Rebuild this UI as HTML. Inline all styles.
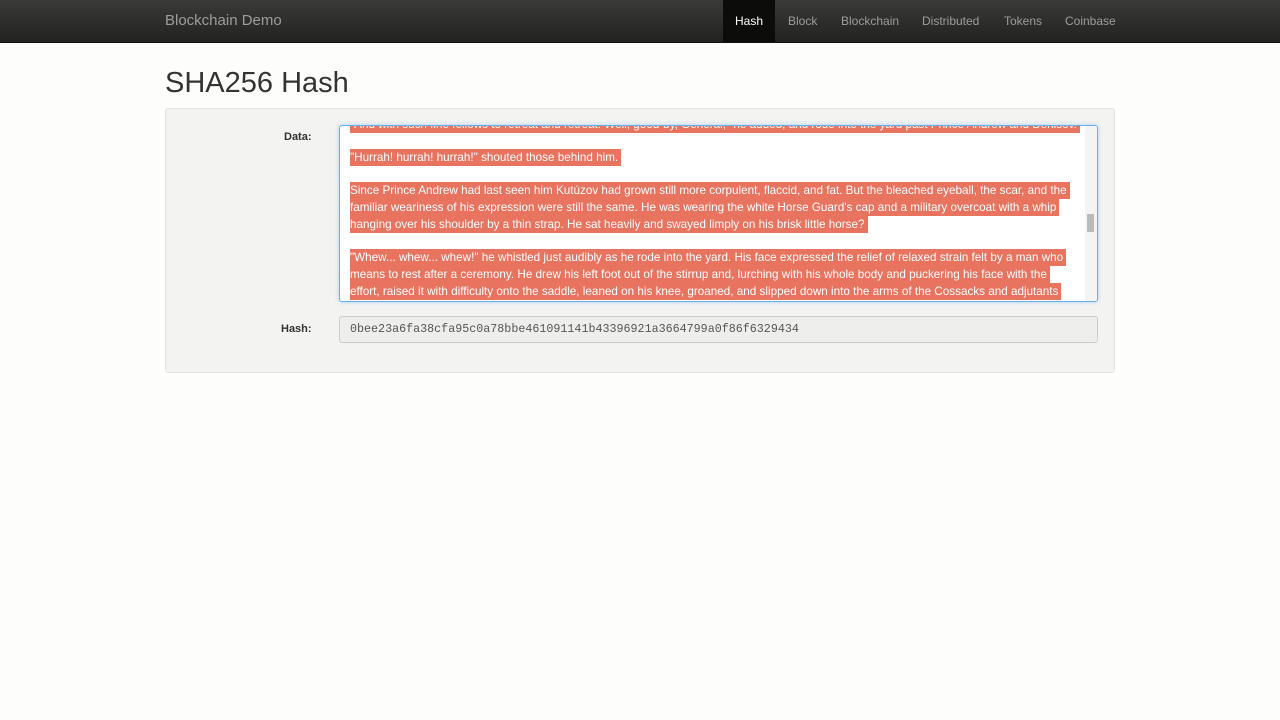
<!DOCTYPE html>
<html><head><meta charset="utf-8"><style>
body{margin:0;width:1280px;height:720px;background:#fdfdfb;font-family:"Liberation Sans",sans-serif;position:relative;overflow:hidden}
.nav{position:absolute;left:0;top:0;width:1280px;height:42px;background:linear-gradient(#3a3a38,#222220);border-bottom:1px solid #111}
.nav a{position:absolute;top:14px;font-size:12px;color:#9d9d9d}
.brand{position:absolute;left:165px;top:12px;font-size:15px;color:#9d9d9d}
.act{position:absolute;left:723px;top:0;width:52px;height:42px;background:#0c0c0b}
h1{position:absolute;left:165px;top:67px;margin:0;font-size:29px;font-weight:normal;color:#333}
.well{position:absolute;left:165px;top:108px;width:948px;height:263px;background:#f3f3f1;border:1px solid #e3e3e3;border-radius:3px}
.lbl{position:absolute;font-size:11px;font-weight:bold;color:#333}
.ta{position:absolute;left:339px;top:125px;width:757px;height:175px;background:#fff;border:1px solid #66afe9;border-radius:3px;box-shadow:0 0 4px rgba(102,175,233,.5);overflow:hidden}
.ln{position:absolute;left:10px;font-size:11.7px;line-height:16.7px;white-space:nowrap}
.ln span{background:#e8735f;color:#fff;padding:2px 3px 2px 0}
.sb{position:absolute;right:0;top:0;width:12px;height:175px;background:#f4f4f4}
.hash{position:absolute;left:339px;top:316px;width:759px;height:27px;background:#eeeeec;border:1px solid #ccc;border-radius:3px;font-family:"Liberation Mono",monospace;font-size:11.7px;color:#555;line-height:25px;padding-left:10px;box-sizing:border-box}
</style></head><body>
<div class="nav"><div class="brand">Blockchain Demo</div><div class="act"></div>
<a style="left:735px;color:#fff">Hash</a><a style="left:788px">Block</a><a style="left:841px">Blockchain</a><a style="left:922px">Distributed</a><a style="left:1004px">Tokens</a><a style="left:1065px">Coinbase</a></div>
<h1>SHA256 Hash</h1>
<div class="well"></div>
<div class="lbl" style="left:284px;top:131px">Data:</div>
<div class="ta">
<div class="ln" style="top:-9px"><span>"And with such fine fellows to retreat and retreat! Well, good-by, General," he added, and rode into the yard past Prince Andrew and Denisov.</span></div>
<div class="ln" style="top:24px"><span>"Hurrah! hurrah! hurrah!" shouted those behind him.</span></div>
<div class="ln" style="top:57px"><span>Since Prince Andrew had last seen him Kutúzov had grown still more corpulent, flaccid, and fat. But the bleached eyeball, the scar, and the</span></div>
<div class="ln" style="top:74px"><span>familiar weariness of his expression were still the same. He was wearing the white Horse Guard's cap and a military overcoat with a whip</span></div>
<div class="ln" style="top:91px"><span>hanging over his shoulder by a thin strap. He sat heavily and swayed limply on his brisk little horse?</span></div>
<div class="ln" style="top:124px"><span>"Whew... whew... whew!" he whistled just audibly as he rode into the yard. His face expressed the relief of relaxed strain felt by a man who</span></div>
<div class="ln" style="top:141px"><span>means to rest after a ceremony. He drew his left foot out of the stirrup and, lurching with his whole body and puckering his face with the</span></div>
<div class="ln" style="top:158px"><span>effort, raised it with difficulty onto the saddle, leaned on his knee, groaned, and slipped down into the arms of the Cossacks and adjutants</span></div>
<div class="sb"><div style="position:absolute;left:2px;top:88px;width:7px;height:18px;background:#bbb"></div></div>
</div>
<div class="lbl" style="left:281px;top:323px">Hash:</div>
<div class="hash">0bee23a6fa38cfa95c0a78bbe461091141b43396921a3664799a0f86f6329434</div>
</body></html>
